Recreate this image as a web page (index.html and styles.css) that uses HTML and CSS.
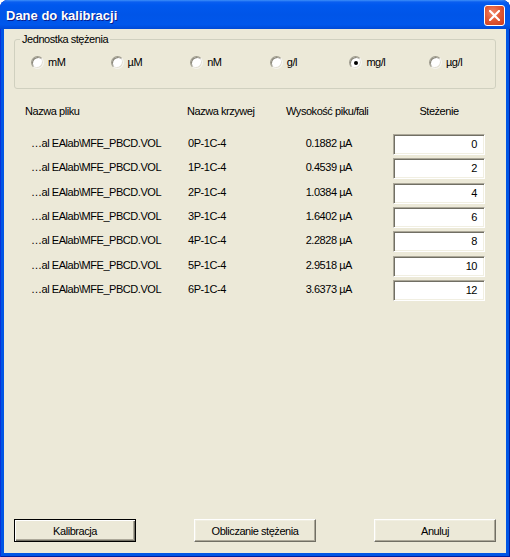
FILE: index.html
```html
<!DOCTYPE html>
<html lang="pl">
<head>
<meta charset="utf-8">
<title>Dane do kalibracji</title>
<link rel="stylesheet" href="styles.css">
</head>
<body>
<div class="window">
  <div class="titlebar">
    <span class="title">Dane do kalibracji</span>
    <span class="close">
      <svg width="11" height="11" viewBox="0 0 11 11"><path d="M1 1 L10 10 M10 1 L1 10" stroke="#fff" stroke-width="2.2" stroke-linecap="square"/></svg>
    </span>
  </div>
  <div class="client">
    <fieldset class="group">
      <legend>Jednostka stężenia</legend>
      <div class="radios">
        <label class="radio"><span class="circle"></span>mM</label>
        <label class="radio"><span class="circle"></span>µM</label>
        <label class="radio"><span class="circle"></span>nM</label>
        <label class="radio"><span class="circle"></span>g/l</label>
        <label class="radio"><span class="circle checked"></span>mg/l</label>
        <label class="radio"><span class="circle"></span>µg/l</label>
      </div>
    </fieldset>

    <div class="thead">
      <span>Nazwa pliku</span>
      <span>Nazwa krzywej</span>
      <span>Wysokość piku/fali</span>
      <span class="center">Steżenie</span>
    </div>

    <div class="tbody">
      <div class="row"><span class="file">…al EAlab\MFE_PBCD.VOL</span><span class="curve">0P-1C-4</span><span class="val">0.1882 µA</span><span class="edit">0</span></div>
      <div class="row"><span class="file">…al EAlab\MFE_PBCD.VOL</span><span class="curve">1P-1C-4</span><span class="val">0.4539 µA</span><span class="edit">2</span></div>
      <div class="row"><span class="file">…al EAlab\MFE_PBCD.VOL</span><span class="curve">2P-1C-4</span><span class="val">1.0384 µA</span><span class="edit">4</span></div>
      <div class="row"><span class="file">…al EAlab\MFE_PBCD.VOL</span><span class="curve">3P-1C-4</span><span class="val">1.6402 µA</span><span class="edit">6</span></div>
      <div class="row"><span class="file">…al EAlab\MFE_PBCD.VOL</span><span class="curve">4P-1C-4</span><span class="val">2.2828 µA</span><span class="edit">8</span></div>
      <div class="row"><span class="file">…al EAlab\MFE_PBCD.VOL</span><span class="curve">5P-1C-4</span><span class="val">2.9518 µA</span><span class="edit">10</span></div>
      <div class="row"><span class="file">…al EAlab\MFE_PBCD.VOL</span><span class="curve">6P-1C-4</span><span class="val">3.6373 µA</span><span class="edit">12</span></div>
    </div>

    <div class="buttons">
      <button class="btn default">Kalibracja</button>
      <button class="btn">Obliczanie stężenia</button>
      <button class="btn">Anuluj</button>
    </div>
  </div>
</div>
</body>
</html>
```

FILE: styles.css
```css
* { box-sizing: border-box; }

html, body {
  margin: 0;
  padding: 0;
  background: #ffffff;
}

body {
  font-family: "Liberation Sans", Arial, sans-serif;
  font-size: 11px;
  letter-spacing: -0.45px;
  color: #000;
}

.window {
  width: 510px;
  height: 557px;
  background: #0055e5;
  border-radius: 8px 8px 0 0;
  display: flex;
  flex-direction: column;
  overflow: hidden;
  box-shadow: inset 1px 0 0 #0831d9, inset -1px 0 0 #001ea0, inset 0 -1px 0 #001ea0;
}

.titlebar {
  height: 29px;
  flex: none;
  display: flex;
  align-items: center;
  justify-content: space-between;
  padding: 2px 5px 0 6px;
  background: linear-gradient(to bottom, #3d8ff8 0, #0a5ef0 2px, #0058ee 5px, #0055e8 50%, #0057ec 85%, #0049d6 100%);
}

.title {
  color: #fff;
  font-weight: bold;
  font-size: 13px;
  letter-spacing: 0;
  text-shadow: 1px 1px 0 #0a1e8c;
}

.close {
  width: 21px;
  height: 21px;
  border: 1px solid #fff;
  border-radius: 3px;
  background: radial-gradient(circle at 40% 35%, #f0886a 0, #e25a36 45%, #cb3a1c 100%);
  display: flex;
  align-items: center;
  justify-content: center;
}

.client {
  flex: 1;
  margin: 0 4px 4px 4px;
  background: #ece9d8;
  display: flex;
  flex-direction: column;
  padding: 4px 10px 11px 10px;
}

.group {
  margin: 0;
  padding: 0 0 19px 0;
  border: 1px solid #d0d0bf;
  border-radius: 3px;
  min-inline-size: 0;
}

.group legend {
  margin-left: 5px;
  padding: 0 2px;
  line-height: 13px;
  color: #000;
}

.radios {
  display: grid;
  grid-template-columns: repeat(6, 79.6px);
  margin: 10px 0 0 16px;
}

.radio {
  display: flex;
  align-items: center;
  gap: 4px;
  height: 13px;
  line-height: 13px;
}

.circle {
  width: 13px;
  height: 13px;
  border-radius: 50%;
  background: #fff;
  border: 1px solid;
  border-color: #9d9a8c #f4f3ee #f4f3ee #9d9a8c;
  box-shadow: inset 1px 1px 0 #8a877a, inset -1px -1px 0 #e2dfd2;
  position: relative;
  flex: none;
}

.circle.checked::after {
  content: "";
  position: absolute;
  left: 3.5px;
  top: 3.5px;
  width: 4px;
  height: 4px;
  border-radius: 50%;
  background: #000;
}

.thead,
.row {
  display: grid;
  grid-template-columns: 162px 99px 107px 92px;
  margin-left: 11px;
}

.thead {
  margin-top: 16px;
  line-height: 13px;
  height: 13px;
}

.thead .center {
  text-align: center;
}

.tbody {
  margin-top: 16px;
  display: grid;
  grid-auto-rows: 24.33px;
}

.row {
  align-items: start;
}

.row span {
  line-height: 13px;
}

.file {
  padding: 3px 0 0 6px;
}

.curve {
  padding: 3px 0 0 1px;
}

.val {
  padding: 3px 41px 0 0;
  text-align: right;
}

.row .edit {
  height: 21px;
  line-height: 17px;
  background: #fff;
  border: 1px solid;
  border-color: #aca899 #ffffff #ffffff #aca899;
  box-shadow: inset 1px 1px 0 #716f64, inset -1px -1px 0 #f1efe2;
  text-align: right;
  padding: 1px 7px 0 0;
}

.buttons {
  margin-top: auto;
  display: flex;
  justify-content: space-between;
}

.btn {
  width: 122px;
  height: 23px;
  font-family: "Liberation Sans", Arial, sans-serif;
  font-size: 11px;
  letter-spacing: -0.45px;
  color: #000;
  background: #ece9d8;
  border: 1px solid;
  border-color: #ffffff #716f64 #716f64 #ffffff;
  box-shadow: inset -1px -1px 0 #aca899, inset 1px 1px 0 #f1efe2;
  padding: 0;
  border-radius: 0;
}

.btn.default {
  border-color: #000;
  box-shadow: inset 1px 1px 0 #fff, inset -1px -1px 0 #716f64, inset -2px -2px 0 #aca899;
}
```
